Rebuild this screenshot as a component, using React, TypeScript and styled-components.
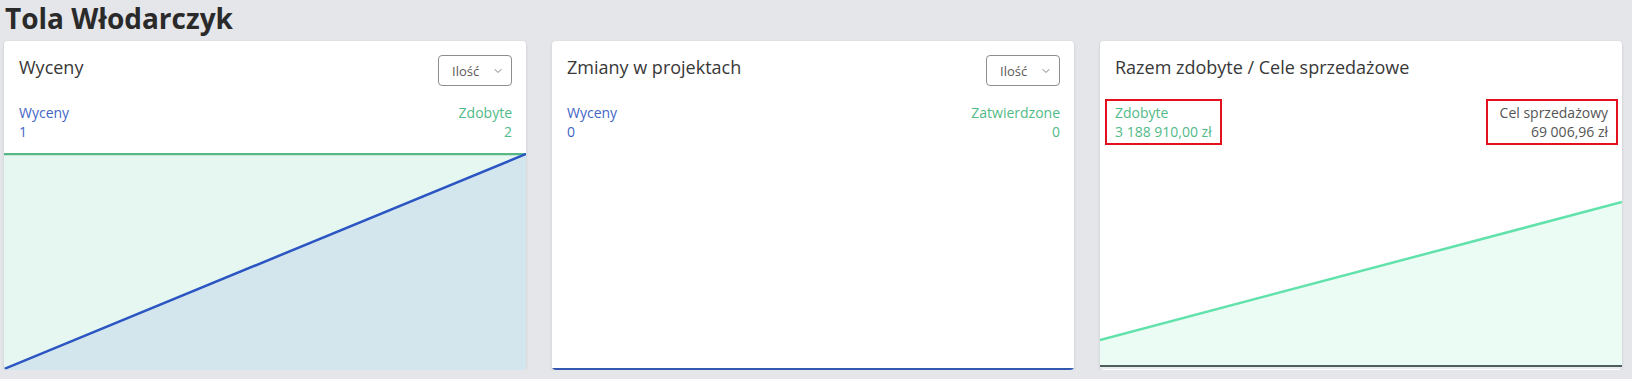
import styled, { createGlobalStyle } from 'styled-components';
import { ChevronDown } from 'lucide-react';

const GlobalStyle = createGlobalStyle`
  * {
    box-sizing: border-box;
  }

  body {
    margin: 0;
    background: #e4e6ea;
    font-family: 'Open Sans', 'Liberation Sans', sans-serif;
    color: #333;
  }
`;

type StatProps = {
  label: string;
  value: string;
  color: string;
  align: 'left' | 'right';
  highlighted?: boolean;
};

const Stat = ({ label, value, color, align, highlighted }: StatProps) => (
  <StatBlock $align={align} $color={color} $highlighted={highlighted}>
    <div>{label}</div>
    <div>{value}</div>
  </StatBlock>
);

const Dropdown = () => (
  <SelectBox type="button">
    <span>Ilość</span>
    <ChevronDown size={12} strokeWidth={1.6} />
  </SelectBox>
);

// wykres: wyceny (niebieski) na tle zdobytych (zielony)
const QuotesChart = () => (
  <ChartSvg viewBox="0 0 522 217" preserveAspectRatio="none">
    <rect x="0" y="1" width="522" height="216" fill="#e6f7f1" />
    <polygon points="0,216 522,1 522,217 0,217" fill="#d3e6ed" />
    <line x1="0" y1="1" x2="522" y2="1" stroke="#57b785" strokeWidth="2.5" vectorEffect="non-scaling-stroke" />
    <line x1="0" y1="216" x2="522" y2="1" stroke="#2a55c2" strokeWidth="2.5" vectorEffect="non-scaling-stroke" />
  </ChartSvg>
);

const ChangesChart = () => (
  <ChartSvg viewBox="0 0 522 217" preserveAspectRatio="none">
    <line x1="0" y1="216" x2="522" y2="216" stroke="#3457b2" strokeWidth="2" vectorEffect="non-scaling-stroke" />
  </ChartSvg>
);

const GoalsChart = () => (
  <ChartSvg viewBox="0 0 522 217" preserveAspectRatio="none">
    <polygon points="0,187 522,49 522,213 0,213" fill="#ebfcf4" />
    <line x1="0" y1="187" x2="522" y2="49" stroke="#62e2ab" strokeWidth="2.5" vectorEffect="non-scaling-stroke" />
    <line x1="0" y1="213" x2="522" y2="213" stroke="#4e5c5c" strokeWidth="2" vectorEffect="non-scaling-stroke" />
    <line x1="0" y1="215" x2="522" y2="215" stroke="#dfe5e5" strokeWidth="1.5" vectorEffect="non-scaling-stroke" />
  </ChartSvg>
);

const BLUE = '#3f66c6';
const GREEN = '#52ba88';
const GRAY = '#555';

const App = () => {
  return (
    <>
      <GlobalStyle />
      <Page>
        <PageTitle>Tola Włodarczyk</PageTitle>
        <CardGrid>
          <Card>
            <CardHeader>
              <CardTitle>Wyceny</CardTitle>
              <Dropdown />
            </CardHeader>
            <StatsRow>
              <Stat label="Wyceny" value="1" color={BLUE} align="left" />
              <Stat label="Zdobyte" value="2" color={GREEN} align="right" />
            </StatsRow>
            <ChartArea>
              <QuotesChart />
            </ChartArea>
          </Card>

          <Card>
            <CardHeader>
              <CardTitle>Zmiany w projektach</CardTitle>
              <Dropdown />
            </CardHeader>
            <StatsRow>
              <Stat label="Wyceny" value="0" color={BLUE} align="left" />
              <Stat label="Zatwierdzone" value="0" color={GREEN} align="right" />
            </StatsRow>
            <ChartArea>
              <ChangesChart />
            </ChartArea>
          </Card>

          <Card>
            <CardHeader>
              <CardTitle>Razem zdobyte / Cele sprzedażowe</CardTitle>
            </CardHeader>
            <StatsRow>
              <Stat label="Zdobyte" value="3 188 910,00 zł" color={GREEN} align="left" highlighted />
              <Stat label="Cel sprzedażowy" value="69 006,96 zł" color={GRAY} align="right" highlighted />
            </StatsRow>
            <ChartArea>
              <GoalsChart />
            </ChartArea>
          </Card>
        </CardGrid>
      </Page>
    </>
  );
};

export default App;

const Page = styled.div`
  padding: 0 10px 0 4px;
`;

const PageTitle = styled.h1`
  margin: 0;
  padding-left: 1px;
  font-size: 28px;
  line-height: 36px;
  font-weight: 700;
  color: #2a2a2a;
`;

const CardGrid = styled.div`
  display: grid;
  grid-template-columns: repeat(3, 1fr);
  gap: 26px;
  margin-top: 5px;
`;

const Card = styled.section`
  height: 329px;
  display: flex;
  flex-direction: column;
  background: #fff;
  border-radius: 4px;
  box-shadow: 0 1px 3px rgba(0, 0, 0, 0.14);
  overflow: hidden;
`;

const CardHeader = styled.div`
  height: 45px;
  padding: 14px 14px 0 15px;
  display: flex;
  justify-content: space-between;
  align-items: flex-start;
`;

const CardTitle = styled.h2`
  margin: 0;
  font-size: 18px;
  line-height: 24px;
  font-weight: 400;
  color: #383838;
`;

const SelectBox = styled.button`
  width: 74px;
  height: 31px;
  padding: 0 7px 0 13px;
  display: flex;
  align-items: center;
  justify-content: space-between;
  background: #fff;
  border: 1px solid #8d8d8d;
  border-radius: 4px;
  font-family: inherit;
  font-size: 13px;
  color: #5a5a5a;
  cursor: pointer;

  svg {
    color: #5a5a5a;
  }
`;

const StatsRow = styled.div`
  margin-top: 17px;
  padding: 0 14px 0 15px;
  display: flex;
  justify-content: space-between;
  align-items: flex-start;
`;

const StatBlock = styled.div<{ $align: 'left' | 'right'; $color: string; $highlighted?: boolean }>`
  font-size: 14px;
  line-height: 19px;
  color: ${(p) => p.$color};
  text-align: ${(p) => p.$align};

  ${(p) =>
    p.$highlighted &&
    `
    border: 2px solid #e3101d;
    margin: -4px 0;
    ${p.$align === 'left' ? 'margin-left: -10px; padding: 2px 8px 2px 8px;' : 'margin-right: -10px; padding: 2px 8px 2px 12px;'}
  `}
`;

const ChartArea = styled.div`
  flex: 1;
  margin-top: 12px;
  min-height: 0;
`;

const ChartSvg = styled.svg`
  display: block;
  width: 100%;
  height: 100%;
`;
